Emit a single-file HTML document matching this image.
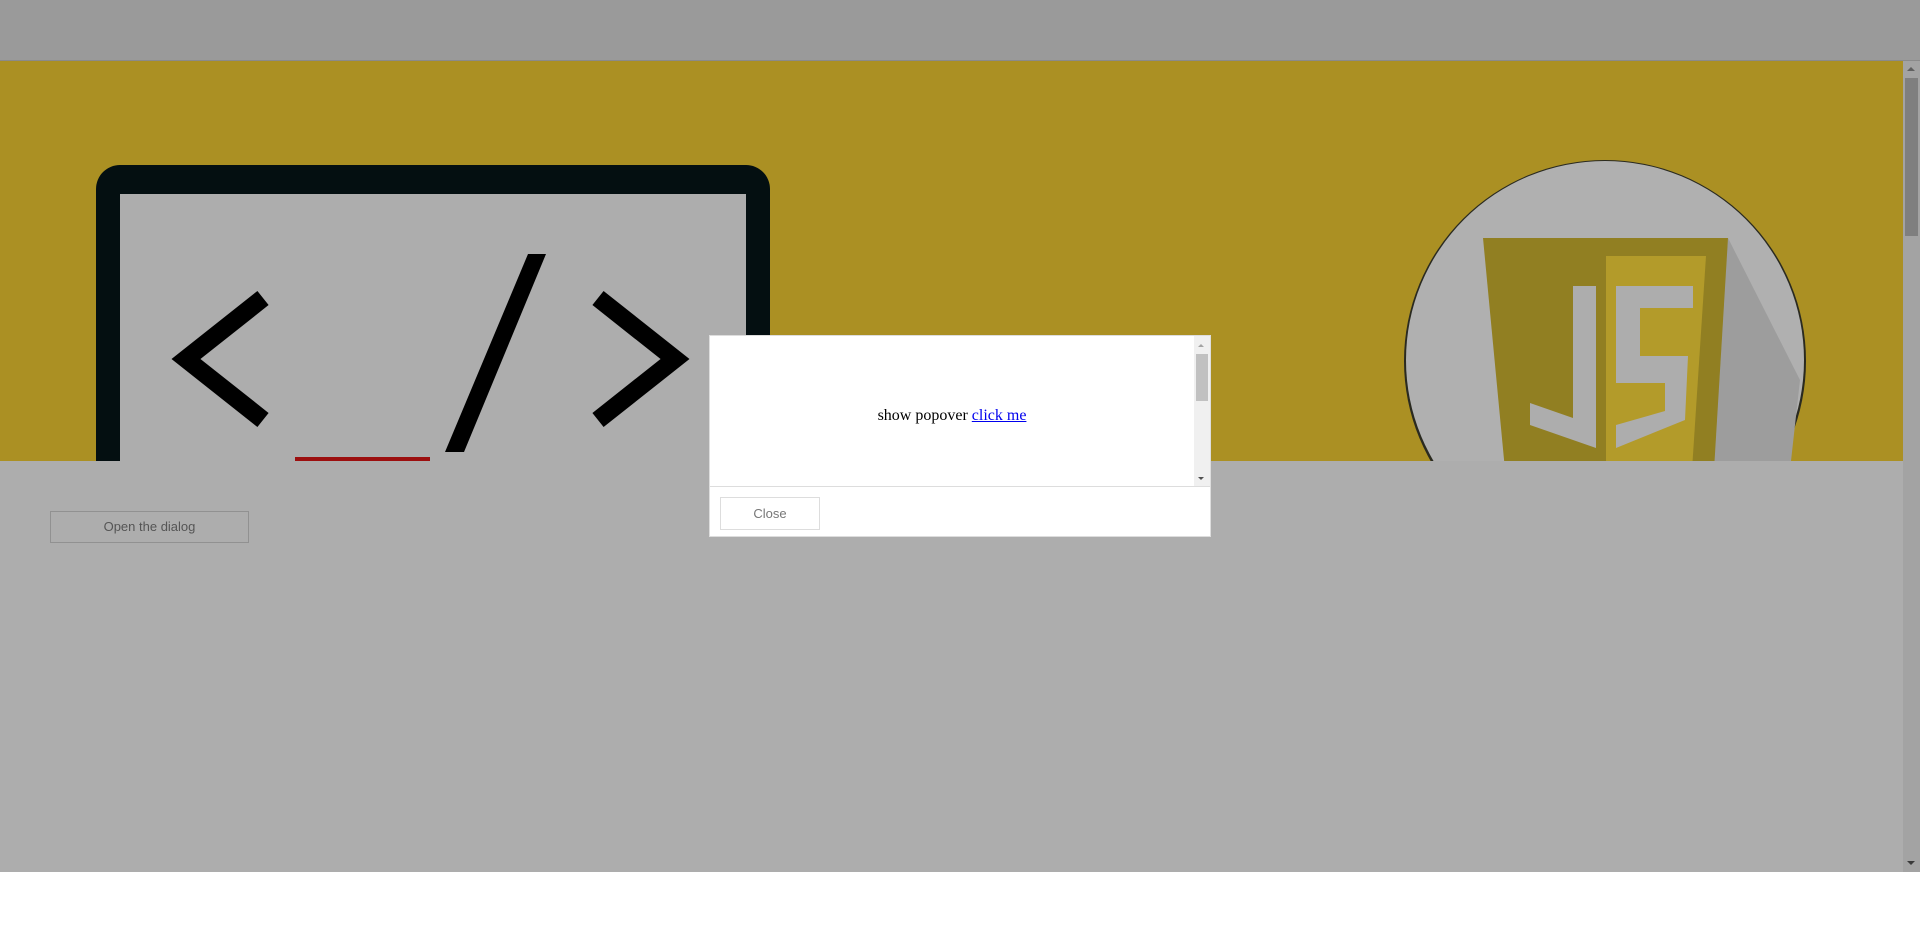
<!DOCTYPE html>
<html><head><meta charset="utf-8"><style>
html,body{margin:0;padding:0;width:1920px;height:933px;overflow:hidden;background:#fff;position:relative;font-family:"Liberation Sans",sans-serif}
.abs{position:absolute}
</style></head><body>
<div class="abs" style="left:0;top:0;width:1920px;height:60px;background:#9a9a9a;border-bottom:1px solid #8a8a8a"></div>
<div class="abs" style="left:0;top:61px;width:1903px;height:811px;background:#adadad"></div>
<div class="abs" style="left:0;top:61px;width:1903px;height:400px;background:#ab9023;overflow:hidden">
<svg width="1903" height="400" viewBox="0 61 1903 400" style="position:absolute;left:0;top:0">
<rect x="96" y="165" width="674" height="400" rx="24" fill="#040f11"/>
<rect x="120" y="194" width="626" height="400" fill="#adadad"/>
<polyline points="263,298 186,359 263,420" fill="none" stroke="#000" stroke-width="18"/>
<polyline points="598,298 675,359 598,420" fill="none" stroke="#000" stroke-width="18"/>
<polygon points="528,254 546,254 464,452 445,452" fill="#000"/>
<rect x="295" y="457" width="135" height="5" fill="#9c0f0f"/>
<circle cx="1605" cy="361" r="201" fill="#2a2a20"/>
<circle cx="1605" cy="360" r="199" fill="#b0b0b0"/>
<polygon points="1728,238 1800,380 1790,470 1700,470" fill="#9d9d9d"/>
<polygon points="1483,238 1728,238 1714,470 1505,470" fill="#917f22"/>
<polygon points="1606,256 1706,256 1692,470 1606,470" fill="#b39b2a"/>
<polygon points="1573,286 1596,286 1596,448 1530,425 1530,403 1573,418" fill="#adadad"/>
<polygon points="1616,286 1693,286 1693,308 1640,308 1640,356 1688,356 1685,420 1616,448 1616,425 1665,411 1665,383 1616,383" fill="#adadad"/>
</svg>
</div>
<div class="abs" style="left:50px;top:511px;width:197px;height:30px;border:1px solid #919191;color:#555;font-size:13px;text-align:center;line-height:30px">Open the dialog</div>
<div class="abs" style="left:1903px;top:61px;width:17px;height:811px;background:#a3a3a3"></div>
<div class="abs" style="left:1905px;top:78px;width:13px;height:158px;background:#7f7f7f"></div>
<div class="abs" style="left:1907px;top:67px;width:0;height:0;border-left:4px solid transparent;border-right:4px solid transparent;border-bottom:4px solid #606060"></div>
<div class="abs" style="left:1907px;top:861px;width:0;height:0;border-left:4px solid transparent;border-right:4px solid transparent;border-top:4px solid #3a3a3a"></div>
<div class="abs" style="left:709px;top:335px;width:500px;height:200px;background:#fff;border:1px solid #ddd">
 <div class="abs" style="left:0;top:5px;width:484px;height:150px;font-family:'Liberation Serif',serif;font-size:16px;text-align:center;line-height:150px;color:#000">show popover <a style="color:#00e;text-decoration:underline">click me</a></div>
 <div class="abs" style="left:484px;top:0;width:16px;height:150px;background:#f0f0f0"></div>
 <div class="abs" style="left:486px;top:18px;width:12px;height:47px;background:#c1c1c1"></div>
 <div class="abs" style="left:488px;top:8px;width:0;height:0;border-left:3px solid transparent;border-right:3px solid transparent;border-bottom:3px solid #a3a3a3"></div>
 <div class="abs" style="left:488px;top:141px;width:0;height:0;border-left:3px solid transparent;border-right:3px solid transparent;border-top:3px solid #505050"></div>
 <div class="abs" style="left:0;top:150px;width:500px;height:1px;background:#ddd"></div>
 <div class="abs" style="left:10px;top:161px;width:98px;height:31px;border:1px solid #ddd;color:#777;font-size:13px;text-align:center;line-height:31px">Close</div>
</div>
</body></html>
